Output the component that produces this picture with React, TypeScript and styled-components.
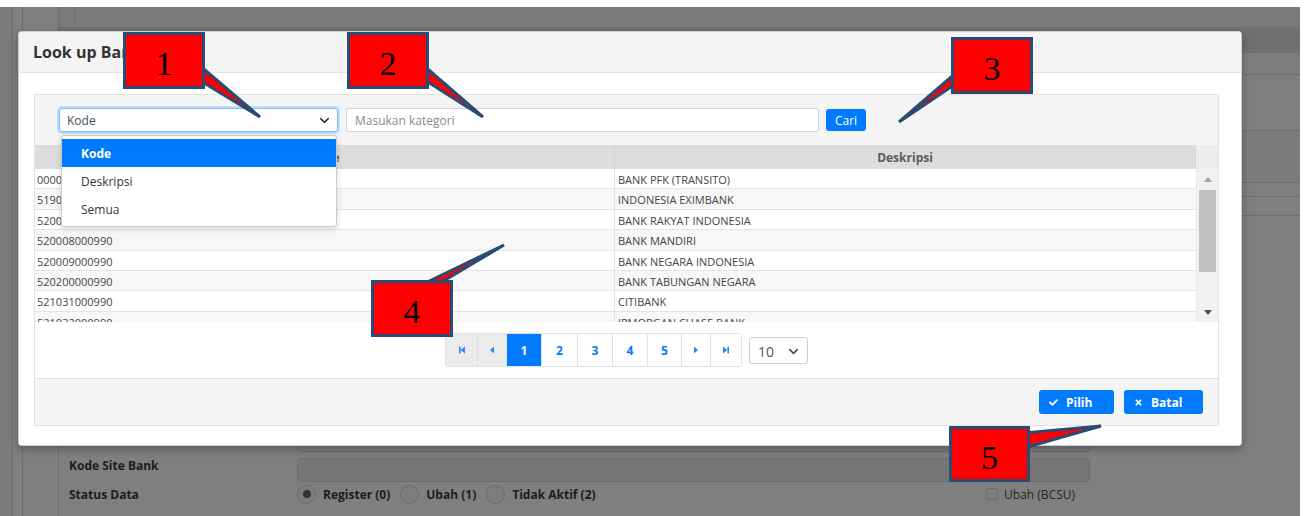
import React from "react";
import styled, { createGlobalStyle } from "styled-components";
import { ChevronDown } from "lucide-react";
import { FaCheck, FaTimes } from "react-icons/fa";

const GlobalStyle = createGlobalStyle`
  html, body { margin: 0; padding: 0; background: #fff; }
  body { font-family: "Open Sans", "Noto Sans", sans-serif; }
  * { box-sizing: border-box; }
`;

const Page = styled.div`
  position: relative;
  width: 1308px;
  height: 516px;
  padding: 7px 8px 0 0;
  background: #fff;
  overflow: hidden;
`;

const Backdrop = styled.div`
  display: flex;
  height: 509px;
  background: #7f7f7f;
`;

const Rail = styled.div<{ $w: number; $tone?: string }>`
  flex: 0 0 ${(p) => p.$w}px;
  background: ${(p) => p.$tone ?? "#7f7f7f"};
  border-right: 1px solid #6d6d6d;
`;

const Main = styled.div`
  flex: 1;
  display: flex;
  flex-direction: column;
`;

const TopBar = styled.div`
  height: 20px;
  display: flex;
  background: #7a7a7a;
`;

const TopStub = styled.div`
  width: 16px;
  border-right: 1px solid #6d6d6d;
`;

const Band = styled.div`
  height: 26px;
  background: #707070;
`;

const Strip = styled.div<{ $h: number; $tone?: string }>`
  height: ${(p) => p.$h}px;
  background: ${(p) => p.$tone ?? "#7f7f7f"};
  border-bottom: 1px solid #6d6d6d;
`;

const Form = styled.div`
  display: grid;
  grid-template-columns: 228px 793px;
  row-gap: 6px;
  padding: 2px 0 0 10px;
  align-items: center;
`;

const FormLabel = styled.div`
  align-self: start;
  padding-top: 0;
  font-size: 12px;
  line-height: 16px;
  font-weight: 700;
  color: #1c1c1c;
`;

const Field = styled.div<{ $disabled?: boolean }>`
  height: 24px;
  border: 1px solid #6b6b6b;
  border-radius: 4px;
  background: ${(p) => (p.$disabled ? "#767676" : "#7d7d7d")};
`;

const StatusControls = styled.div`
  display: flex;
  align-items: center;
  height: 20px;
  margin-top: -4px;
`;

const StatusLabel = styled.div`
  margin-top: -4px;
  font-size: 12px;
  font-weight: 700;
  color: #1c1c1c;
`;

const RadioOption = styled.div`
  display: flex;
  align-items: center;
  gap: 7px;
  margin-right: 10px;
  font-size: 12px;
  font-weight: 700;
  color: #1c1c1c;
`;

const RadioCircle = styled.span<{ $checked?: boolean }>`
  width: 19px;
  height: 19px;
  border-radius: 50%;
  border: 1px solid #6b6b6b;
  background: #7d7d7d;
  display: flex;
  align-items: center;
  justify-content: center;
  &::after {
    content: "";
    width: 8px;
    height: 8px;
    border-radius: 50%;
    background: ${(p) => (p.$checked ? "#333" : "transparent")};
  }
`;

const CheckOption = styled.div`
  margin-left: auto;
  margin-right: 15px;
  display: flex;
  align-items: center;
  gap: 6px;
  font-size: 12px;
  color: #262626;
`;

const CheckBox = styled.span`
  width: 12px;
  height: 12px;
  border: 1px solid #6b6b6b;
  border-radius: 2px;
  background: #7d7d7d;
`;

/* ---------- Modal ---------- */

const Modal = styled.div`
  position: absolute;
  left: 18px;
  top: 31px;
  width: 1224px;
  height: 415px;
  background: #fff;
  border: 1px solid rgba(0, 0, 0, 0.18);
  border-radius: 4px;
  box-shadow: 0 3px 9px rgba(0, 0, 0, 0.3);
  display: flex;
  flex-direction: column;
`;

const ModalHeader = styled.div`
  height: 41px;
  flex: 0 0 41px;
  background: #f4f4f4;
  border-bottom: 1px solid #e4e4e4;
  border-radius: 4px 4px 0 0;
  display: flex;
  align-items: center;
  padding-left: 14px;
  font-size: 16px;
  font-weight: 700;
  color: #333;
`;

const ModalBody = styled.div`
  flex: 1;
  padding: 21px 22px 0 15px;
`;

const Panel = styled.div`
  height: 332px;
  border: 1px solid #e2e2e2;
  display: flex;
  flex-direction: column;
`;

const SearchBar = styled.div`
  height: 50px;
  flex: 0 0 50px;
  background: #f4f4f4;
  display: flex;
  align-items: center;
  padding-left: 24px;
  gap: 8px;
`;

const SelectWrap = styled.div`
  position: relative;
  width: 279px;
`;

const SelectBox = styled.div`
  height: 24px;
  border: 1px solid #80bdff;
  border-radius: 3px;
  background: #fff;
  box-shadow: 0 0 0 2px rgba(0, 123, 255, 0.2);
  display: flex;
  align-items: center;
  justify-content: space-between;
  padding: 0 5px 0 7px;
  font-size: 12px;
  color: #495057;
`;

const Menu = styled.div`
  position: absolute;
  top: 27px;
  left: 2px;
  width: 276px;
  padding: 3px 0;
  background: #fff;
  border: 1px solid #cacaca;
  border-radius: 3px;
  box-shadow: 0 2px 6px rgba(0, 0, 0, 0.15);
  z-index: 5;
`;

const MenuItem = styled.div<{ $active?: boolean }>`
  height: 28px;
  display: flex;
  align-items: center;
  padding-left: 19px;
  font-size: 12px;
  font-weight: ${(p) => (p.$active ? 700 : 400)};
  color: ${(p) => (p.$active ? "#fff" : "#333")};
  background: ${(p) => (p.$active ? "#007bff" : "#fff")};
`;

const TextInput = styled.div`
  width: 473px;
  height: 24px;
  border: 1px solid #ced4da;
  border-radius: 3px;
  background: #fff;
  display: flex;
  align-items: center;
  padding-left: 8px;
  font-size: 12px;
  color: #8a8a8a;
`;

const SearchButton = styled.div`
  margin-left: -1px;
  width: 40px;
  height: 22px;
  border-radius: 3px;
  background: #007bff;
  color: #fff;
  font-size: 12px;
  display: flex;
  align-items: center;
  justify-content: center;
`;

const HeaderRow = styled.div`
  height: 24px;
  flex: 0 0 24px;
  display: grid;
  grid-template-columns: 580px 581px 1fr;
  background: #dddddd;
`;

const HeaderCell = styled.div<{ $spacer?: boolean }>`
  display: flex;
  align-items: center;
  justify-content: center;
  font-size: 12px;
  font-weight: 700;
  color: #5a5a5a;
  border-right: ${(p) => (p.$spacer ? "none" : "1px solid #d2d2d2")};
  background: ${(p) => (p.$spacer ? "#ececec" : "transparent")};
`;

const TableBody = styled.div`
  height: 153px;
  flex: 0 0 153px;
  display: flex;
  overflow: hidden;
`;

const Rows = styled.div`
  width: 1161px;
  overflow: hidden;
`;

const Row = styled.div<{ $alt?: boolean }>`
  height: 20.4px;
  display: grid;
  grid-template-columns: 580px 1fr;
  border-bottom: 1px solid #e4e4e4;
  background: ${(p) => (p.$alt ? "#f7f7f7" : "#fff")};
`;

const Cell = styled.div<{ $first?: boolean }>`
  font-size: 11px;
  line-height: 19px;
  padding-top: 1px;
  color: #444;
  padding-left: ${(p) => (p.$first ? "2px" : "3px")};
  border-right: ${(p) => (p.$first ? "1px solid #e4e4e4" : "none")};
  white-space: nowrap;
`;

const ScrollTrack = styled.div`
  flex: 1;
  background: #f1f1f1;
  border-left: 1px solid #e8e8e8;
  display: flex;
  flex-direction: column;
  align-items: center;
`;

const ScrollArrow = styled.div`
  height: 20px;
  flex: 0 0 20px;
  display: flex;
  align-items: center;
  justify-content: center;
`;

const ScrollThumb = styled.div`
  width: 17px;
  height: 82px;
  margin-top: 1px;
  background: #c1c1c1;
`;

const ScrollFill = styled.div`
  flex: 1;
`;

const PagerArea = styled.div`
  height: 57px;
  flex: 0 0 57px;
  border-bottom: 1px solid #e0e0e0;
  display: flex;
  align-items: center;
  justify-content: center;
  gap: 7px;
  background: #fff;
`;

const Pager = styled.div`
  display: flex;
  height: 34px;
  border: 1px solid #dee2e6;
  border-radius: 3px;
  overflow: hidden;
`;

const PageButton = styled.div<{ $w: number; $state?: "active" | "disabled" }>`
  width: ${(p) => p.$w}px;
  height: 100%;
  display: flex;
  align-items: center;
  justify-content: center;
  font-size: 12px;
  font-weight: 700;
  color: ${(p) => (p.$state === "active" ? "#fff" : "#007bff")};
  background: ${(p) =>
    p.$state === "active" ? "#007bff" : p.$state === "disabled" ? "#ebebeb" : "#fff"};
  & + & {
    border-left: 1px solid #dee2e6;
  }
`;

const SizeSelect = styled.div`
  width: 59px;
  height: 27px;
  border: 1px solid #cfcfcf;
  border-radius: 3px;
  background: #fff;
  display: flex;
  align-items: center;
  justify-content: space-between;
  padding: 3px 6px 0 8px;
  font-size: 14px;
  color: #555;
`;

const Footer = styled.div`
  flex: 1;
  background: #f4f4f4;
  display: flex;
  align-items: center;
  justify-content: flex-end;
  padding-right: 15px;
  gap: 10px;
`;

const ActionButton = styled.div<{ $w: number }>`
  width: ${(p) => p.$w}px;
  height: 24px;
  border-radius: 3px;
  background: #007bff;
  color: #fff;
  font-size: 12px;
  font-weight: 700;
  display: flex;
  align-items: center;
  padding-left: 10px;
  gap: 8px;
`;

/* ---------- Callouts ---------- */

const Annotations = styled.svg`
  position: absolute;
  left: 0;
  top: 0;
  width: 1308px;
  height: 516px;
  pointer-events: none;
  z-index: 10;
`;

const CalloutBox = styled.div<{ $x: number; $y: number; $w: number; $h: number }>`
  position: absolute;
  left: ${(p) => p.$x}px;
  top: ${(p) => p.$y}px;
  width: ${(p) => p.$w}px;
  height: ${(p) => p.$h}px;
  background: #ff0000;
  border: 3px solid #2b4b72;
  display: flex;
  justify-content: center;
  padding-top: 12px;
  font-family: "Liberation Serif", "Times New Roman", serif;
  font-size: 34px;
  line-height: 34px;
  color: #000;
  z-index: 11;
`;

type Callout = { n: string; x: number; y: number; w: number; h: number; wedge: number[][] };

const callouts: Callout[] = [
  { n: "1", x: 123, y: 32, w: 82, h: 57, wedge: [[199, 65], [260, 117], [199, 80]] },
  { n: "2", x: 347, y: 32, w: 82, h: 57, wedge: [[423, 65], [483, 117], [423, 79]] },
  { n: "3", x: 951, y: 37, w: 82, h: 57, wedge: [[957, 72], [899, 122], [957, 83]] },
  { n: "4", x: 371, y: 280, w: 82, h: 57, wedge: [[419, 286], [504, 245], [435, 286]] },
  { n: "5", x: 949, y: 426, w: 81, h: 56, wedge: [[1024, 433], [1101, 426], [1024, 448]] },
];

const rows = [
  ["000000000990", "BANK PFK (TRANSITO)"],
  ["519000000990", "INDONESIA EXIMBANK"],
  ["520002000990", "BANK RAKYAT INDONESIA"],
  ["520008000990", "BANK MANDIRI"],
  ["520009000990", "BANK NEGARA INDONESIA"],
  ["520200000990", "BANK TABUNGAN NEGARA"],
  ["521031000990", "CITIBANK"],
  ["521032000990", "JPMORGAN CHASE BANK"],
];

const PagerIcon = ({ kind }: { kind: "first" | "prev" | "next" | "last" }) => {
  const c = "#2f86f6";
  return (
    <svg width="8" height="8" viewBox="0 0 8 8">
      {kind === "first" && (
        <>
          <rect x="1" y="0.5" width="1.6" height="7" fill={c} />
          <path d="M7 0.5 L2.6 4 L7 7.5 Z" fill={c} />
        </>
      )}
      {kind === "prev" && <path d="M6 0.5 L2 4 L6 7.5 Z" fill={c} />}
      {kind === "next" && <path d="M2 0.5 L6 4 L2 7.5 Z" fill={c} />}
      {kind === "last" && (
        <>
          <path d="M1 0.5 L5.4 4 L1 7.5 Z" fill={c} />
          <rect x="5.4" y="0.5" width="1.6" height="7" fill={c} />
        </>
      )}
    </svg>
  );
};

const formRows = [
  "Kode Bank",
  "Nama Bank",
  "Alamat",
  "Kota",
  "Kode Pos",
  "Telepon",
  "Kode BI",
  "Kode Swift",
  "Kode Site Bank",
];

export default function App() {
  return (
    <>
      <GlobalStyle />
      <Page>
        <Backdrop>
          <Rail $w={13} $tone="#7b7b7b" />
          <Rail $w={10} />
          <Rail $w={36} />
          <Main>
            <TopBar>
              <TopStub />
            </TopBar>
            <Band />
            <Strip $h={22} $tone="#7d7d7d" />
            <Strip $h={56} />
            <Strip $h={52} $tone="#7c7c7c" />
            <Strip $h={14} />
            <Strip $h={19} />
            <Form>
              {formRows.map((label, i) => (
                <React.Fragment key={label}>
                  <FormLabel>{label}</FormLabel>
                  <Field $disabled={i === formRows.length - 1} />
                </React.Fragment>
              ))}
              <StatusLabel>Status Data</StatusLabel>
              <StatusControls>
                <RadioOption>
                  <RadioCircle $checked />
                  Register (0)
                </RadioOption>
                <RadioOption>
                  <RadioCircle />
                  Ubah (1)
                </RadioOption>
                <RadioOption>
                  <RadioCircle />
                  Tidak Aktif (2)
                </RadioOption>
                <CheckOption>
                  <CheckBox />
                  Ubah (BCSU)
                </CheckOption>
              </StatusControls>
            </Form>
          </Main>
        </Backdrop>

        <Modal>
          <ModalHeader>Look up Bank</ModalHeader>
          <ModalBody>
            <Panel>
              <SearchBar>
                <SelectWrap>
                  <SelectBox>
                    Kode
                    <ChevronDown size={15} strokeWidth={2.4} color="#333" />
                  </SelectBox>
                  <Menu>
                    <MenuItem $active>Kode</MenuItem>
                    <MenuItem>Deskripsi</MenuItem>
                    <MenuItem>Semua</MenuItem>
                  </Menu>
                </SelectWrap>
                <TextInput>Masukan kategori</TextInput>
                <SearchButton>Cari</SearchButton>
              </SearchBar>
              <HeaderRow>
                <HeaderCell>Kode</HeaderCell>
                <HeaderCell>Deskripsi</HeaderCell>
                <HeaderCell $spacer />
              </HeaderRow>
              <TableBody>
                <Rows>
                  {rows.map(([kode, desk], i) => (
                    <Row key={kode} $alt={i % 2 === 1}>
                      <Cell $first>{kode}</Cell>
                      <Cell>{desk}</Cell>
                    </Row>
                  ))}
                </Rows>
                <ScrollTrack>
                  <ScrollArrow>
                    <svg width="8" height="5" viewBox="0 0 8 5">
                      <path d="M0 5 L4 0 L8 5 Z" fill="#a3a3a3" />
                    </svg>
                  </ScrollArrow>
                  <ScrollThumb />
                  <ScrollFill />
                  <ScrollArrow>
                    <svg width="8" height="5" viewBox="0 0 8 5">
                      <path d="M0 0 L4 5 L8 0 Z" fill="#505050" />
                    </svg>
                  </ScrollArrow>
                </ScrollTrack>
              </TableBody>
              <PagerArea>
                <Pager>
                  <PageButton $w={31} $state="disabled">
                    <PagerIcon kind="first" />
                  </PageButton>
                  <PageButton $w={29} $state="disabled">
                    <PagerIcon kind="prev" />
                  </PageButton>
                  <PageButton $w={35} $state="active">1</PageButton>
                  <PageButton $w={36}>2</PageButton>
                  <PageButton $w={35}>3</PageButton>
                  <PageButton $w={35}>4</PageButton>
                  <PageButton $w={34}>5</PageButton>
                  <PageButton $w={29}>
                    <PagerIcon kind="next" />
                  </PageButton>
                  <PageButton $w={31}>
                    <PagerIcon kind="last" />
                  </PageButton>
                </Pager>
                <SizeSelect>
                  10
                  <ChevronDown size={15} strokeWidth={2.4} color="#444" />
                </SizeSelect>
              </PagerArea>
              <Footer>
                <ActionButton $w={75}>
                  <FaCheck size={9} />
                  Pilih
                </ActionButton>
                <ActionButton $w={79}>
                  <FaTimes size={9} />
                  Batal
                </ActionButton>
              </Footer>
            </Panel>
          </ModalBody>
        </Modal>

        <Annotations viewBox="0 0 1308 516">
          {callouts.map((c) => (
            <polygon
              key={c.n}
              points={c.wedge.map((p) => p.join(",")).join(" ")}
              fill="#ff0000"
              stroke="#2b4b72"
              strokeWidth={3}
              strokeLinejoin="miter"
            />
          ))}
        </Annotations>
        {callouts.map((c) => (
          <CalloutBox key={c.n} $x={c.x} $y={c.y} $w={c.w} $h={c.h}>
            {c.n}
          </CalloutBox>
        ))}
      </Page>
    </>
  );
}
